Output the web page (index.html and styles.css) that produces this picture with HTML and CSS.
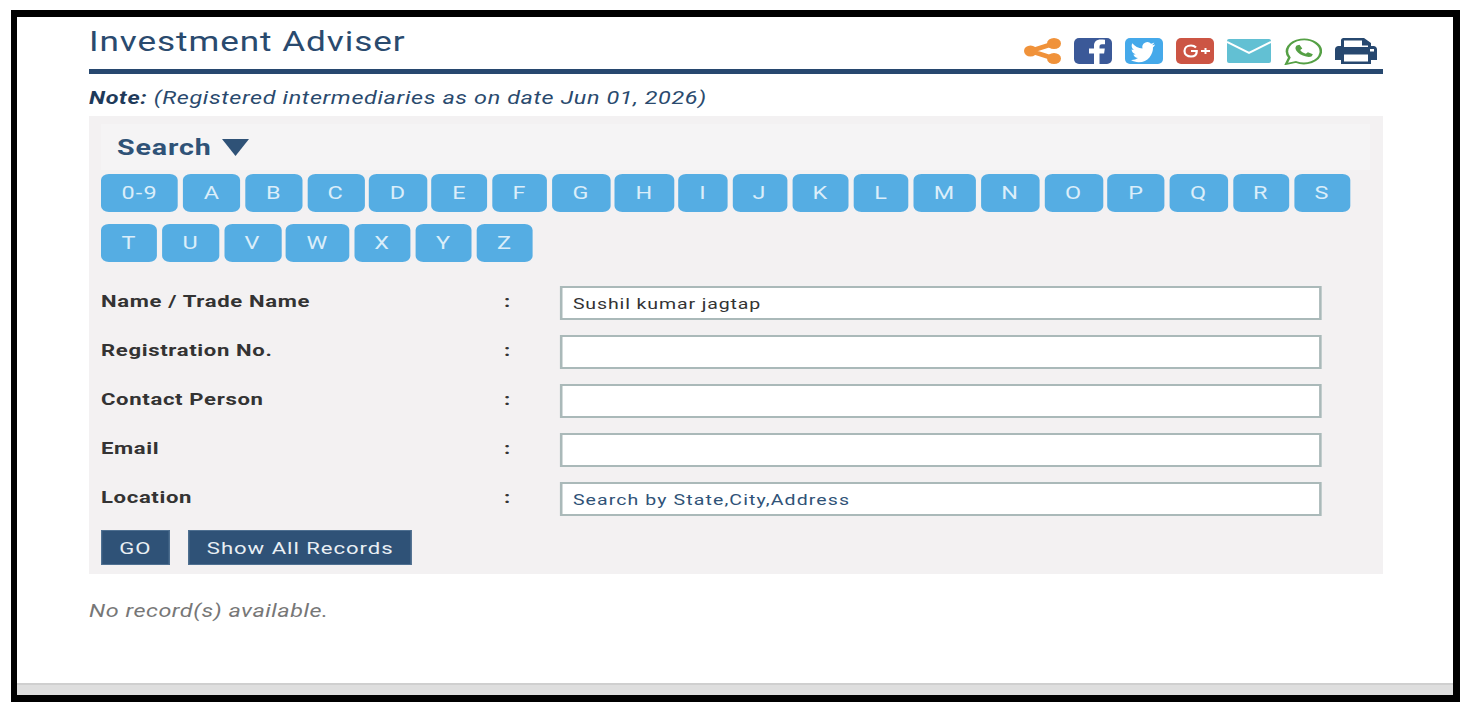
FILE: index.html
```html
<!DOCTYPE html>
<html lang="en">
<head>
<meta charset="utf-8">
<title>Investment Adviser</title>
<link rel="stylesheet" href="styles.css">
</head>
<body>
<div class="frame">
  <main class="content">
    <header class="head">
      <h1 class="title wide">Investment Adviser</h1>
      <div class="icons">
        <svg class="ic" width="37" height="26" viewBox="0 0 37 26"><g fill="#f0923a"><ellipse cx="6.500" cy="13" rx="6.500" ry="5.500"/><ellipse cx="30" cy="5.500" rx="7" ry="5.500"/><ellipse cx="30" cy="20.500" rx="7" ry="5.500"/></g><path d="M6.500 13L30 5.500M6.500 13L30 20.500" stroke="#f0923a" stroke-width="4.500"/></svg>
        <svg class="ic" width="38" height="26" viewBox="0 0 38 26"><rect width="38" height="26" rx="5" fill="#3b5998"/><path d="M20 26V15.500h-5v-5h5V7.500C20 3.500 23 1.500 26.500 1.500c1.500 0 3 .1 4.500.3v4.500h-3c-2 0-2.500 1-2.500 2.500v1.700h5.300l-.7 5h-4.600V26z" fill="#fff"/></svg>
        <svg class="ic" width="38" height="26" viewBox="0 0 38 26"><rect width="38" height="26" rx="5" fill="#45a9ea"/><path d="M30 6.500c-.9.400-1.800.7-2.900.8 1-.6 1.800-1.500 2.200-2.700-1 .6-2 1-3.200 1.200a5 5 0 0 0-8.600 4.600c-4.100-.2-7.800-2.200-10.200-5.200-1.300 2.300-.6 5.200 1.500 6.700-.8 0-1.600-.2-2.200-.6 0 2.400 1.700 4.500 4 5-.7.200-1.500.2-2.200.1.600 2 2.500 3.400 4.600 3.500A10 10 0 0 1 6 22c2.200 1.400 4.900 2.200 7.700 2.200 9.400 0 14.600-7.900 14.300-15 1-.7 1.800-1.600 2-2.700z" fill="#fff"/></svg>
        <svg class="ic" width="38" height="26" viewBox="0 0 38 26"><rect width="38" height="26" rx="5" fill="#cc5544"/><path d="M20 9.600C18.800 8.300 17.200 7.500 15 7.500c-4 0-6.500 2.500-6.500 5.500s2.500 5.500 6.500 5.500c3.500 0 5.700-2 5.700-5v-.5H15" fill="none" stroke="#fff" stroke-width="2.200"/><path d="M25 13h9M29.500 10v6" stroke="#fff" stroke-width="2"/></svg>
        <svg class="ic" width="44" height="24" viewBox="0 0 44 24"><rect width="44" height="24" rx="2" fill="#62c0d3"/><path d="M0 3L22 14 44 3" fill="none" stroke="#fff" stroke-width="2"/></svg>
        <svg class="ic" width="38" height="27" viewBox="0 0 27 27" preserveAspectRatio="none"><path d="M1.500 26l2.300-6.500A12 12 0 1 1 8.500 24z" fill="#fff" stroke="#55a045" stroke-width="1.800"/><path d="M9 7.500l2-.8 2 3.800-1.500 1.500c.8 1.700 2.200 3 4 3.800l1.500-1.500 3.500 2-.8 2c-1 1-3.500 1-6.300-.7-2.800-1.600-4.800-4.200-5.200-6.500-.2-1.400.1-2.600.8-3.600z" fill="#55a045"/></svg>
        <svg class="ic" width="42" height="26" viewBox="0 0 42 26"><path d="M6 9V2.500C6 1 7 0 8.500 0H29l7 5v4M3.500 8h35C40.500 8 42 9.500 42 11.500V22h-6v4H6v-4H0V11.500C0 9.500 1.500 8 3.500 8z" fill="#27486f"/><path d="M9 2.500h18v5h6V9H9z" fill="#fff"/><rect x="9" y="16.500" width="24" height="7" fill="#fff"/><rect x="35" y="11" width="4" height="2.500" fill="#fff"/></svg>
      </div>
    </header>
    <p class="note wide"><b>Note:</b> (Registered intermediaries as on date Jun 01, 2026)</p>
    <section class="panel">
      <div class="search-head"><span class="wide">Search</span><svg class="caret" width="27" height="17" viewBox="0 0 27 17"><path d="M0 0H27L13.500 17z" fill="#2f5277"/></svg></div>
      <div class="letters">
        <a class="letter">0-9</a><a class="letter">A</a><a class="letter">B</a><a class="letter">C</a><a class="letter">D</a><a class="letter">E</a><a class="letter">F</a><a class="letter">G</a><a class="letter">H</a><a class="letter">I</a><a class="letter">J</a><a class="letter">K</a><a class="letter">L</a><a class="letter">M</a><a class="letter">N</a><a class="letter">O</a><a class="letter">P</a><a class="letter">Q</a><a class="letter">R</a><a class="letter">S</a><a class="letter">T</a><a class="letter">U</a><a class="letter">V</a><a class="letter">W</a><a class="letter">X</a><a class="letter">Y</a><a class="letter">Z</a>
      </div>
      <form class="form">
        <label class="lbl">Name / Trade Name</label><span class="colon">:</span><input class="field" value="Sushil kumar jagtap">
        <label class="lbl">Registration No.</label><span class="colon">:</span><input class="field">
        <label class="lbl">Contact Person</label><span class="colon">:</span><input class="field">
        <label class="lbl">Email</label><span class="colon">:</span><input class="field">
        <label class="lbl">Location</label><span class="colon">:</span><input class="field" placeholder="Search by State,City,Address">
      </form>
      <div class="actions"><button class="btn" type="button">GO</button><button class="btn" type="button">Show All Records</button></div>
    </section>
    <p class="empty wide">No record(s) available.</p>
  </main>
  <footer class="foot"></footer>
</div>
</body>
</html>
```
FILE: styles.css
```css
* { box-sizing: border-box; }
html, body { margin: 0; height: 100%; background: #fff; }
body { padding: 10px 8px 8px 11px; font-family: Roboto, "Liberation Sans", sans-serif; overflow: hidden; }
.frame { height: 692px; border: 7px solid #000; border-left-width: 6px; display: flex; flex-direction: column; background: #fff; }
.content { flex: 1; margin: 0 70px 0 72px; }
/* The reference is stretched sideways: these blocks are laid out narrow and widened. */
.wide, .letters, .form, .actions { transform: scaleX(1.3); transform-origin: left center; }
.head { height: 52px; display: flex; justify-content: space-between; position: relative; }
.head::after { content: ""; position: absolute; left: 0; right: 0; bottom: -5px; height: 5px; background: #27486f; }
.title { margin: 6px 0 0; font-size: 27px; line-height: 38px; font-weight: 400; color: #2a4a6e; letter-spacing: .72px; }
.icons { display: flex; align-items: center; gap: 13px; padding: 16px 6px 0 0; margin-left: -1px; }
.ic { display: block; flex: none; }
.note { width: 480px; white-space: nowrap; margin: 17px 0 0; height: 26px; font-size: 18px; line-height: 24px; font-style: italic; color: #2a4a6e; letter-spacing: .48px; }
.note b { color: #1e3a5a; }
.panel { margin-top: 4px; height: 458px; background: #f3f1f2; padding: 8px 12px 0; }
.search-head { height: 46px; margin-right: 1px; background: #f5f4f5; padding-left: 16px; display: flex; align-items: center; gap: 32px; font-size: 22px; font-weight: 700; color: #2f5277; letter-spacing: .65px; }
.search-head span { display: inline-block; }
.caret { margin-top: 1px; }
.letters { display: flex; flex-wrap: wrap; column-gap: 3.85px; row-gap: 12px; margin-top: 4px; width: 976px; }
.letter { height: 38px; padding: 0 15.7px; border-radius: 6px; background: #55ade3; color: #dbeefa; font-size: 18px; line-height: 37px; letter-spacing: .95px; }
.form { display: grid; width: 939px; grid-template-columns: 310px 43px 586px; grid-auto-rows: 34px; row-gap: 15px; margin-top: 24px; }
.lbl { font-size: 17px; font-weight: 700; color: #333; line-height: 30px; letter-spacing: .5px; }
.colon { font-size: 17px; font-weight: 700; color: #333; line-height: 31px; }
.field { width: 586px; height: 34px; border: 2px solid #aab9b9; background: #fff; padding: 2px 8px 0; font-family: Roboto, "Liberation Sans", sans-serif; font-size: 15px; letter-spacing: .68px; color: #333; outline: 0; }
.field::placeholder { color: #2f5277; opacity: 1; letter-spacing: .85px; }
.actions { display: flex; gap: 14.6px; margin-top: 14px; width: 400px; }
.btn { height: 35px; padding: 0 13px; border: 1px solid #4f7091; background: #2f5277; color: #e9eff4; font-family: Roboto, "Liberation Sans", sans-serif; font-size: 17px; letter-spacing: .75px; }
.empty { width: 200px; white-space: nowrap; margin: 25px 0 0; font-size: 18px; line-height: 24px; font-style: italic; color: #777; letter-spacing: .4px; }
.foot { height: 12px; background: #dedede; border-top: 2px solid #cfcfcf; }
```
